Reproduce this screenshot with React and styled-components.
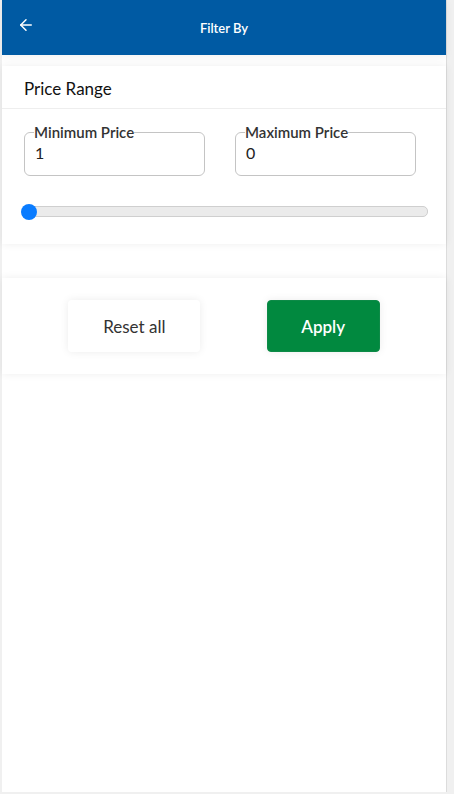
import React from 'react';
import styled, { createGlobalStyle } from 'styled-components';
import { ArrowLeft } from 'lucide-react';

const GlobalStyle = createGlobalStyle`
  html, body {
    margin: 0;
    padding: 0;
    background: #f0f0f0;
    font-family: Lato, "Open Sans", sans-serif;
  }
`;

const Screen = styled.div`
  margin-left: 2px;
  width: 445px;
  height: 792px;
  background: #fff;
  border-right: 1px solid #dcdcdc;
  box-sizing: border-box;
  display: flex;
  flex-direction: column;
`;

const Header = styled.header`
  height: 55px;
  background: #005aa3;
  color: #fff;
  display: flex;
  align-items: center;
  position: relative;
  box-shadow: 0 2px 8px rgba(0, 0, 0, 0.06);
`;

const BackButton = styled.button`
  border: 0;
  background: none;
  padding: 0;
  margin-left: 15px;
  margin-top: -6px;
  color: #fff;
  display: flex;
`;

const Title = styled.h1`
  position: absolute;
  left: 0;
  right: 0;
  text-align: center;
  margin: 0;
  font-size: 13px;
  font-weight: 600;
  pointer-events: none;
`;

const Card = styled.section`
  background: #fff;
  margin-top: ${props => props.gap}px;
  box-shadow: 0 0 8px rgba(0, 0, 0, 0.07);
`;

const CardHead = styled.div`
  height: 43px;
  box-sizing: border-box;
  padding: 3px 0 0 22px;
  display: flex;
  align-items: center;
  font-size: 17px;
  color: #111;
  border-bottom: 1px solid #eeeeee;
`;

const CardBody = styled.div`
  padding: 16px 20px 27px 20px;
`;

const Fields = styled.div`
  display: flex;
  gap: 30px;
  padding: 0 10px 0 2px;
`;

const Field = styled.fieldset`
  flex: 1;
  margin: 0;
  height: 51px;
  box-sizing: border-box;
  border: 1px solid #c4c4c4;
  border-radius: 6px;
  padding: 0 10px;
`;

const Legend = styled.legend`
  font-size: 15px;
  font-weight: 600;
  color: #333;
  padding: 0;
  margin-left: -1px;
  line-height: 15px;
`;

const Value = styled.div`
  font-size: 16px;
  color: #222;
  line-height: 20px;
  margin-top: 3px;
`;

const Slider = styled.div`
  position: relative;
  margin-top: 30px;
  height: 9px;
  border: 1px solid #cfcfcf;
  border-radius: 5px;
  background: #ebebeb;
  margin-right: -2px;
`;

const Thumb = styled.span`
  position: absolute;
  left: -2px;
  top: 50%;
  width: 16px;
  height: 16px;
  margin-top: -8px;
  border-radius: 50%;
  background: #0a7cff;
`;

const Actions = styled.div`
  height: 96px;
  display: flex;
  align-items: center;
  justify-content: space-evenly;
`;

const Button = styled.button`
  height: 52px;
  width: ${props => props.w}px;
  border-radius: 4px;
  font-family: Lato, sans-serif;
  font-size: 17px;
  border: ${props => props.primary ? '1px solid #0d8a47' : '0'};
  background: ${props => props.primary ? '#01893f' : '#fff'};
  color: ${props => props.primary ? '#fff' : '#333'};
  font-weight: ${props => props.primary ? 600 : 400};
  box-shadow: 0 0 8px rgba(0, 0, 0, 0.08);
`;

const App = () => {
  return (
    <>
      <GlobalStyle />
      <Screen>
        <Header>
          <BackButton aria-label="Back">
            <ArrowLeft size={18} strokeWidth={2} />
          </BackButton>
          <Title>Filter By</Title>
        </Header>
        <Card gap={11}>
          <CardHead>Price Range</CardHead>
          <CardBody>
            <Fields>
              <Field>
                <Legend>Minimum Price</Legend>
                <Value>1</Value>
              </Field>
              <Field>
                <Legend>Maximum Price</Legend>
                <Value>0</Value>
              </Field>
            </Fields>
            <Slider>
              <Thumb />
            </Slider>
          </CardBody>
        </Card>
        <Card gap={34}>
          <Actions>
            <Button w={132}>Reset all</Button>
            <Button primary w={113}>Apply</Button>
          </Actions>
        </Card>
      </Screen>
    </>
  );
};

export default App;
